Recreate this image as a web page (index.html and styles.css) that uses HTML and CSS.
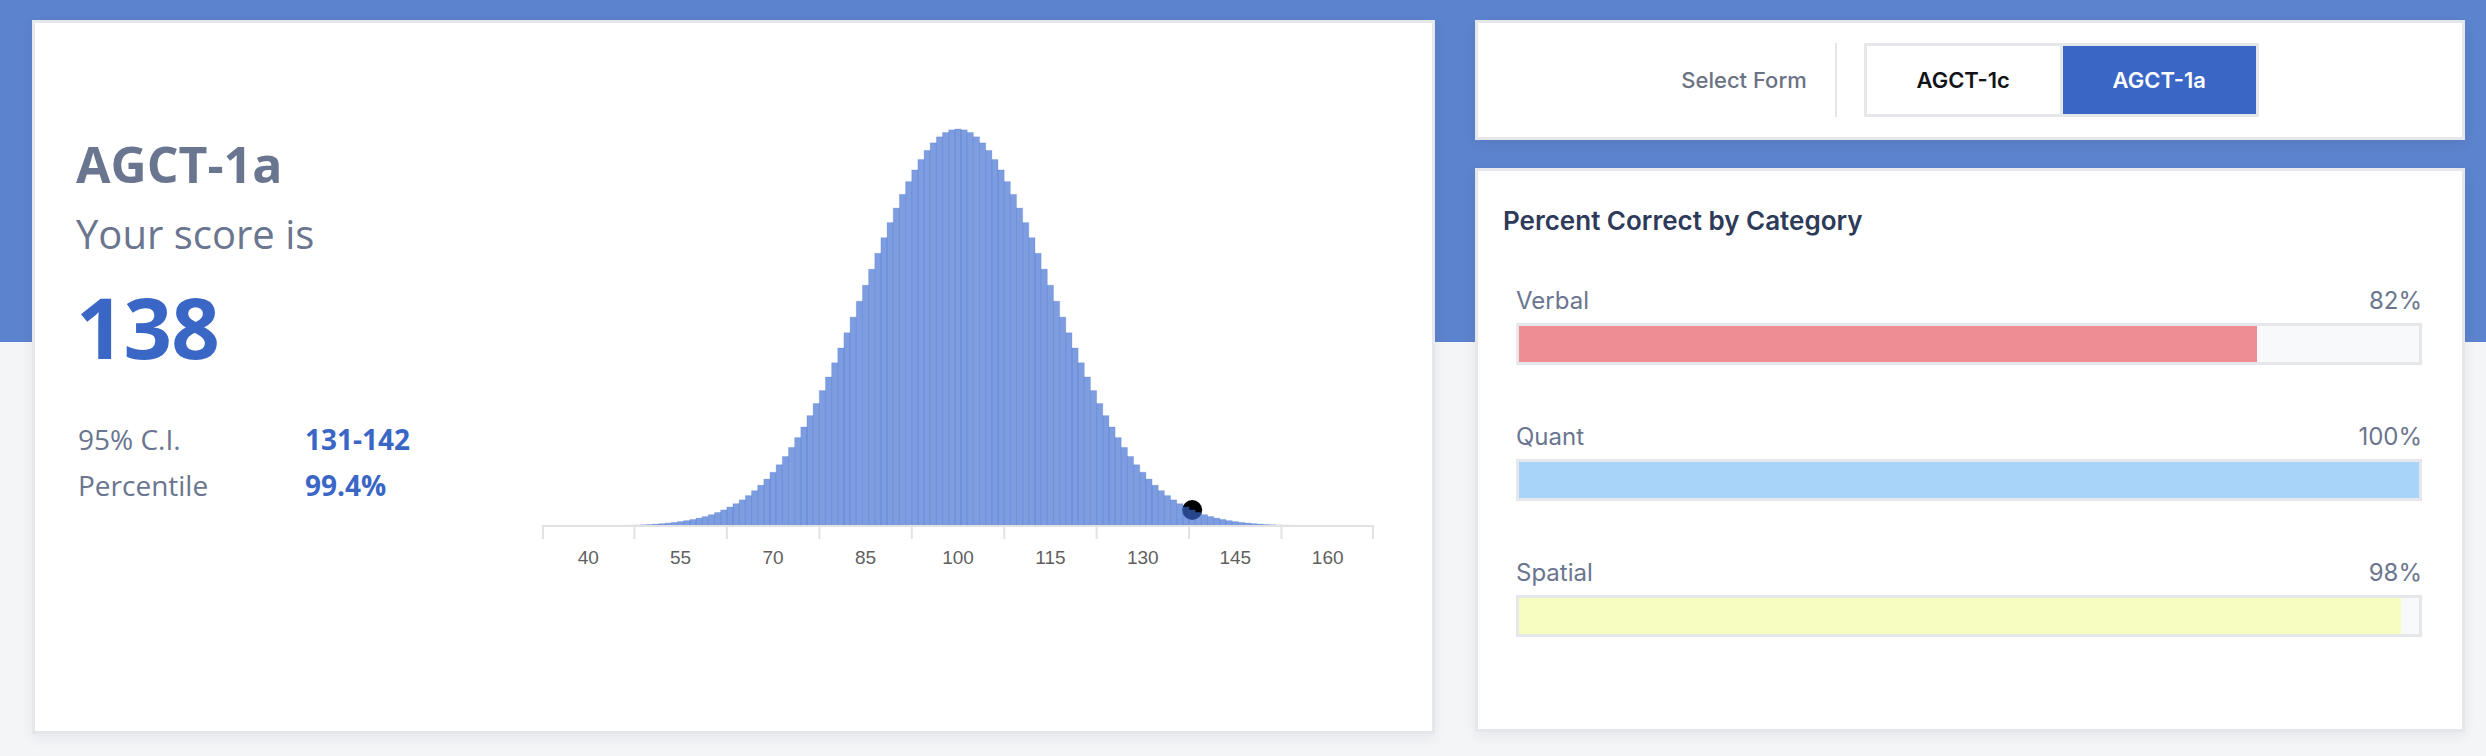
FILE: index.html
```html
<!DOCTYPE html>
<html lang="en">
<head>
<meta charset="utf-8">
<title>AGCT Score</title>
<link rel="stylesheet" href="styles.css">
</head>
<body>
<main class="page">
  <section class="card score-card">
    <div class="score-text">
      <h1 class="form-name">AGCT-1a</h1>
      <p class="score-intro">Your score is</p>
      <p class="score-value">138</p>
      <dl class="stats">
        <dt>95% C.I.</dt><dd>131-142</dd>
        <dt>Percentile</dt><dd>99.4%</dd>
      </dl>
    </div>
    <svg class="chart" width="840" height="470" viewBox="0 0 840 470">
      <circle class="marker" cx="650.2" cy="400" r="10"></circle>
      <g class="bars" id="bars"></g>
      <line class="axis" x1="0" y1="416" x2="832" y2="416"></line>
      <g class="ticks">
        <line x1="1" y1="416" x2="1" y2="429"></line>
        <line x1="92.4" y1="416" x2="92.4" y2="429"></line>
        <line x1="184.9" y1="416" x2="184.9" y2="429"></line>
        <line x1="277.3" y1="416" x2="277.3" y2="429"></line>
        <line x1="369.8" y1="416" x2="369.8" y2="429"></line>
        <line x1="462.2" y1="416" x2="462.2" y2="429"></line>
        <line x1="554.6" y1="416" x2="554.6" y2="429"></line>
        <line x1="647.1" y1="416" x2="647.1" y2="429"></line>
        <line x1="739.5" y1="416" x2="739.5" y2="429"></line>
        <line x1="831" y1="416" x2="831" y2="429"></line>
      </g>
      <g class="labels">
        <text x="46.2" y="454">40</text>
        <text x="138.6" y="454">55</text>
        <text x="231.1" y="454">70</text>
        <text x="323.5" y="454">85</text>
        <text x="416" y="454">100</text>
        <text x="508.4" y="454">115</text>
        <text x="600.8" y="454">130</text>
        <text x="693.3" y="454">145</text>
        <text x="785.7" y="454">160</text>
      </g>
    </svg>
  </section>

  <div class="side">
    <section class="card form-card">
      <span class="form-label">Select Form</span>
      <span class="divider"></span>
      <div class="toggle">
        <button class="toggle-btn">AGCT-1c</button>
        <button class="toggle-btn active">AGCT-1a</button>
      </div>
    </section>

    <section class="card category-card">
      <h2 class="category-title">Percent Correct by Category</h2>
      <div class="rows">
        <div class="row">
          <div class="row-head"><span>Verbal</span><span>82%</span></div>
          <div class="track"><div class="fill verbal" style="width:82%"></div></div>
        </div>
        <div class="row">
          <div class="row-head"><span>Quant</span><span>100%</span></div>
          <div class="track"><div class="fill quant" style="width:100%"></div></div>
        </div>
        <div class="row">
          <div class="row-head"><span>Spatial</span><span>98%</span></div>
          <div class="track"><div class="fill spatial" style="width:98%"></div></div>
        </div>
      </div>
    </section>
  </div>
</main>
<script src="script.js"></script>
</body>
</html>
```

FILE: styles.css
```css
* { box-sizing: border-box; }

html, body {
  margin: 0;
  padding: 0;
}

body {
  width: 2486px;
  height: 756px;
  overflow: hidden;
  background: linear-gradient(to bottom, #5c83cd 0, #5c83cd 342px, #f4f5f7 342px, #f4f5f7 100%);
  font-family: "Open Sans", "Noto Sans", sans-serif;
}

.page {
  display: grid;
  grid-template-columns: 1403px 990px;
  column-gap: 40px;
  align-items: start;
  padding: 20px 21px 0 32px;
}

.card {
  background: #ffffff;
  border: 3px solid #e5e7eb;
  box-shadow: 0 4px 12px rgba(30, 40, 70, 0.07);
}

/* ---------- Score card ---------- */
.score-card {
  height: 714px;
  display: flex;
  align-items: flex-start;
  padding: 87px 0 0 41px;
}

.score-text {
  width: 466px;
  flex: none;
  padding-top: 24px;
  color: #6a758f;
}

.form-name {
  margin: 0;
  font-size: 50px;
  line-height: 60px;
  font-weight: 700;
  color: #6a758f;
}

.score-intro {
  margin: 16px 0 0;
  font-size: 40px;
  line-height: 48px;
  font-weight: 400;
}

.score-value {
  margin: 18px 0 0;
  font-size: 85px;
  line-height: 100px;
  font-weight: 700;
  color: #3a66c6;
  letter-spacing: -1px;
}

.stats {
  margin: 40px 0 0;
  display: grid;
  grid-template-columns: 227px auto;
  font-size: 28px;
  line-height: 46px;
  padding-left: 2px;
}

.stats dt {
  margin: 0;
  font-weight: 400;
  color: #6a758f;
}

.stats dd {
  margin: 0;
  font-weight: 700;
  color: #3a66c6;
}

.chart {
  flex: none;
  display: block;
  overflow: visible;
}

.marker { fill: #000000; }

.bars rect {
  fill: #3a6ad0;
  fill-opacity: 0.66;
  stroke: #3a6ad0;
  stroke-opacity: 0.22;
  stroke-width: 1;
}

.axis {
  stroke: #e2e2e2;
  stroke-width: 2;
}

.ticks line {
  stroke: #e2e2e2;
  stroke-width: 2;
}

.labels text {
  font-family: "Liberation Sans", Arial, sans-serif;
  font-size: 19px;
  fill: #5f5f5f;
  text-anchor: middle;
}

/* ---------- Side column ---------- */
.side {
  display: flex;
  flex-direction: column;
  gap: 28px;
}

.form-card {
  height: 120px;
  display: flex;
  align-items: center;
  justify-content: center;
  font-family: "Inter", "Noto Sans", sans-serif;
}

.form-label {
  font-size: 22px;
  font-weight: 500;
  color: #6b7284;
  margin-right: 28px;
}

.divider {
  width: 2px;
  height: 74px;
  background: #e5e7eb;
  margin-right: 27px;
}

.toggle {
  display: flex;
  gap: 3px;
  padding: 3px;
  background: #e5e7eb;
}

.toggle-btn {
  width: 193px;
  height: 68px;
  border: 0;
  margin: 0;
  padding: 0;
  background: #ffffff;
  font-family: "Inter", "Noto Sans", sans-serif;
  font-size: 22px;
  font-weight: 600;
  color: #111318;
}

.toggle-btn.active {
  background: #3a66c6;
  color: #ffffff;
}

.category-card {
  height: 564px;
  padding: 34px 40px 0 25px;
  font-family: "Inter", "Noto Sans", sans-serif;
}

.category-title {
  margin: 0;
  font-size: 26px;
  line-height: 32px;
  font-weight: 600;
  color: #2d3a5a;
}

.rows {
  margin-top: 49px;
  padding-left: 13px;
  display: flex;
  flex-direction: column;
  gap: 57px;
}

.row-head {
  display: flex;
  justify-content: space-between;
  font-size: 24px;
  line-height: 29px;
  color: #6a758f;
  margin-bottom: 8px;
}

.track {
  height: 42px;
  border: 3px solid #e5e7eb;
  background: #f8f9fb;
}

.fill {
  height: 100%;
}

.fill.verbal { background: #ee8d94; }
.fill.quant { background: #a9d4f9; }
.fill.spatial { background: #f7fdc1; }
```

FILE: script.js
```js
(function () {
  var NS = "http://www.w3.org/2000/svg";
  var g = document.getElementById("bars");
  var step = 92.44 / 15;
  var x0 = 46.2;
  var base = 416;
  var peak = 397;
  for (var v = 40; v <= 160; v++) {
    var h = peak * Math.exp(-((v - 100) * (v - 100)) / 450);
    var r = document.createElementNS(NS, "rect");
    r.setAttribute("x", (x0 + (v - 40) * step - step / 2).toFixed(2));
    r.setAttribute("y", (base - h).toFixed(2));
    r.setAttribute("width", step.toFixed(2));
    r.setAttribute("height", h.toFixed(2));
    g.appendChild(r);
  }
})();
```
